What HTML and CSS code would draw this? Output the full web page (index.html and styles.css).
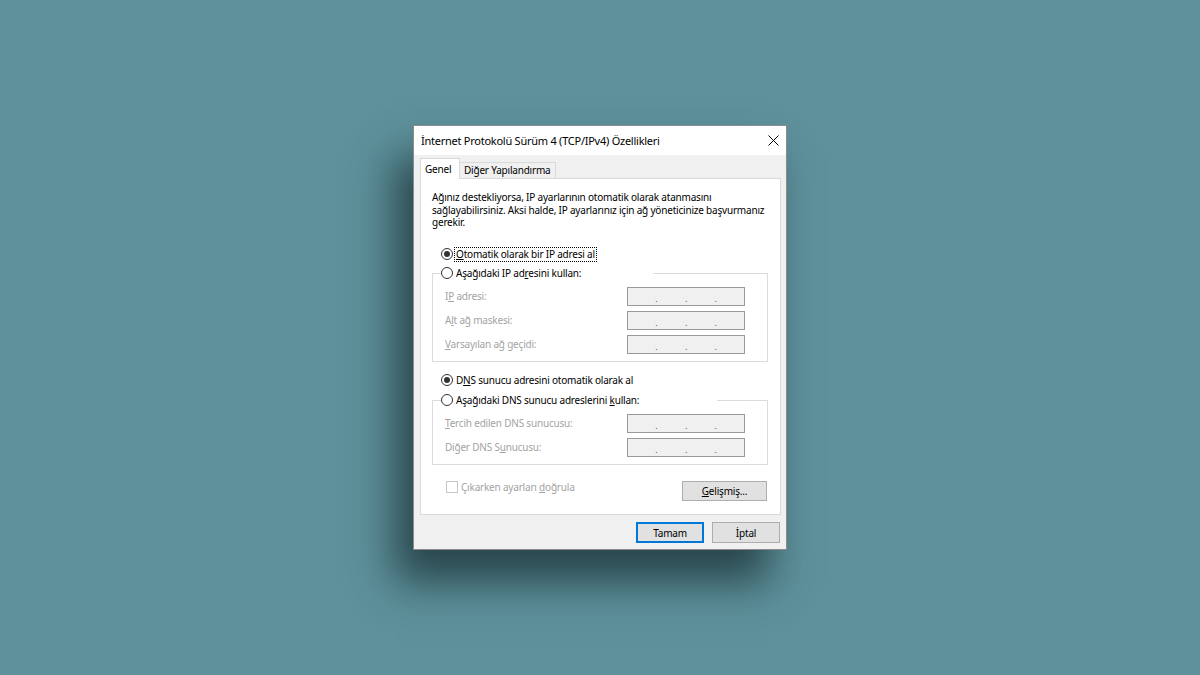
FILE: index.html
```html
<!DOCTYPE html>
<html lang="tr">
<head>
  <meta charset="UTF-8">
  <title>İnternet Protokolü Sürüm 4 (TCP/IPv4) Özellikleri</title>
  <link rel="stylesheet" href="styles.css">
</head>
<body>
  <div class="dialog">
    <div class="titlebar">
      <span class="title">İnternet Protokolü Sürüm 4 (TCP/IPv4) Özellikleri</span>
      <span class="close">
        <svg width="11" height="11" viewBox="0 0 11 11"><path d="M0.5 0.5L10.5 10.5M10.5 0.5L0.5 10.5" stroke="#000" stroke-width="1"/></svg>
      </span>
    </div>
    <div class="content">
      <div class="tabs">
        <div class="tab active">Genel</div>
        <div class="tab">Diğer Yapılandırma</div>
      </div>
      <div class="panel">
        <p class="intro">Ağınız destekliyorsa, IP ayarlarının otomatik olarak atanmasını<br>sağlayabilirsiniz. Aksi halde, IP ayarlarınız için ağ yöneticinize başvurmanız<br>gerekir.</p>

        <div class="radio-row ip-auto">
          <span class="radio checked"></span>
          <span class="label focus"><u>O</u>tomatik olarak bir IP adresi al</span>
        </div>
        <div class="group ip-group">
          <div class="group-head">
            <span class="radio"></span>
            <span class="label">Aşağıdaki IP ad<u>r</u>esini kullan:</span>
          </div>
          <div class="field first">
            <span class="field-label">I<u>P</u> adresi:</span>
            <span class="ip-box"><i>.</i><i>.</i><i>.</i></span>
          </div>
          <div class="field">
            <span class="field-label">A<u>l</u>t ağ maskesi:</span>
            <span class="ip-box"><i>.</i><i>.</i><i>.</i></span>
          </div>
          <div class="field">
            <span class="field-label"><u>V</u>arsayılan ağ geçidi:</span>
            <span class="ip-box"><i>.</i><i>.</i><i>.</i></span>
          </div>
        </div>

        <div class="radio-row dns-auto">
          <span class="radio checked"></span>
          <span class="label">D<u>N</u>S sunucu adresini otomatik olarak al</span>
        </div>
        <div class="group dns-group">
          <div class="group-head">
            <span class="radio"></span>
            <span class="label">Aşağıdaki DNS sunucu adreslerini <u>k</u>ullan:</span>
          </div>
          <div class="field first">
            <span class="field-label"><u>T</u>ercih edilen DNS sunucusu:</span>
            <span class="ip-box"><i>.</i><i>.</i><i>.</i></span>
          </div>
          <div class="field">
            <span class="field-label">Diğer DNS S<u>u</u>nucusu:</span>
            <span class="ip-box"><i>.</i><i>.</i><i>.</i></span>
          </div>
        </div>

        <div class="check-row">
          <span class="checkbox"></span>
          <span class="check-label">Çıkarken ayarları <u>d</u>oğrula</span>
          <button class="btn advanced"><u>G</u>elişmiş...</button>
        </div>
      </div>
      <div class="footer">
        <button class="btn default">Tamam</button>
        <button class="btn">İptal</button>
      </div>
    </div>
  </div>
</body>
</html>
```

FILE: styles.css
```css
body {
  margin: 0;
  height: 675px;
  background-color: #5e919b;
  font-family: "Noto Sans", "Liberation Sans", sans-serif;
  display: flex;
  align-items: center;
  justify-content: center;
  color: #000;
}
.dialog {
  width: 374px;
  height: 425px;
  box-sizing: border-box;
  border: 1px solid #8c8c8c;
  background-color: #f0f0f0;
  display: flex;
  flex-direction: column;
  box-shadow: -18px 32px 40px rgba(20, 40, 45, 0.72);
}
.titlebar {
  height: 29px;
  flex: none;
  background-color: #fff;
  display: flex;
  align-items: center;
  padding-left: 7px;
}
.title {
  flex: 1;
  font-size: 11px;
  letter-spacing: -0.25px;
  white-space: nowrap;
}
.close {
  width: 26px;
  height: 29px;
  display: flex;
  align-items: center;
  justify-content: center;
}
.close svg {
  display: block;
}
.content {
  flex: 1;
  padding: 3px 6px 0 6px;
  display: flex;
  flex-direction: column;
}
.tabs {
  display: flex;
  align-items: flex-end;
  height: 20px;
  flex: none;
}
.tab {
  box-sizing: border-box;
  height: 16px;
  padding: 0 4px;
  border: 1px solid #d9d9d9;
  border-bottom: none;
  border-left: none;
  font-size: 10px;
  letter-spacing: -0.2px;
  line-height: 15px;
  white-space: nowrap;
}
.tab.active {
  width: 40px;
  height: 21px;
  margin-bottom: -1px;
  border-left: 1px solid #d9d9d9;
  background-color: #fff;
  line-height: 20px;
  position: relative;
  z-index: 1;
}
.panel {
  flex: none;
  box-sizing: border-box;
  width: 361px;
  height: 337px;
  border: 1px solid #d9d9d9;
  background-color: #fff;
  padding: 12px 12px 0 11px;
  font-size: 10px;
  letter-spacing: -0.2px;
}
.intro {
  margin: 0;
  line-height: 12.5px;
  white-space: nowrap;
}
.radio-row,
.group-head {
  display: flex;
  align-items: center;
  height: 16px;
  white-space: nowrap;
}
.radio-row {
  padding-left: 9px;
}
.ip-auto {
  margin-top: 17.5px;
}
.dns-auto {
  margin-top: 10px;
}
.radio {
  width: 12px;
  height: 12px;
  box-sizing: border-box;
  border: 1px solid #333;
  border-radius: 50%;
  margin-right: 2px;
  display: flex;
  align-items: center;
  justify-content: center;
  flex: none;
  background-color: #fff;
}
.radio.checked::after {
  content: "";
  width: 6px;
  height: 6px;
  border-radius: 50%;
  background-color: #333;
}
.label {
  padding: 0 1px;
  line-height: 13px;
}
.label.focus {
  outline: 1px dotted #000;
}
.group {
  border: 1px solid #dcdcdc;
  padding-bottom: 5px;
}
.ip-group {
  margin-top: 11px;
}
.dns-group {
  margin-top: 12px;
}
.group-head {
  margin: -9px 0 0 8px;
  background-color: #fff;
}
.ip-group .group-head {
  width: 212px;
}
.dns-group .group-head {
  width: 276px;
}
.field {
  display: flex;
  align-items: center;
  height: 24px;
  padding: 0 22px 0 12px;
  white-space: nowrap;
}
.field.first {
  margin-top: 3px;
}
.field-label {
  flex: 1;
  color: #a3a3a3;
}
.ip-box {
  width: 118px;
  height: 19px;
  box-sizing: border-box;
  border: 1px solid #9a9a9a;
  background-color: #f0f0f0;
  display: flex;
  justify-content: space-evenly;
  align-items: center;
}
.ip-box i {
  font-style: normal;
  color: #555;
  font-size: 9px;
  line-height: 9px;
  margin-top: 4px;
}
.check-row {
  display: flex;
  align-items: flex-start;
  margin-top: 16px;
  padding-left: 14px;
}
.checkbox {
  width: 12px;
  height: 12px;
  box-sizing: border-box;
  border: 1px solid #c6c6c6;
  background-color: #fff;
  flex: none;
}
.check-label {
  margin-left: 3px;
  line-height: 12px;
  color: #a3a3a3;
  white-space: nowrap;
}
.btn {
  box-sizing: border-box;
  height: 21px;
  width: 68px;
  padding: 0;
  border: 1px solid #adadad;
  background-color: #e1e1e1;
  font-family: "Noto Sans", "Liberation Sans", sans-serif;
  font-size: 10px;
  letter-spacing: -0.2px;
  color: #000;
}
.btn.advanced {
  width: 85px;
  height: 20px;
  margin-left: auto;
  margin-right: 1px;
}
.btn.default {
  border: 2px solid #0078d7;
}
.footer {
  display: flex;
  justify-content: flex-end;
  gap: 8px;
  margin-top: 7px;
}
u {
  text-decoration-thickness: 1px;
  text-underline-offset: 1px;
}
```
